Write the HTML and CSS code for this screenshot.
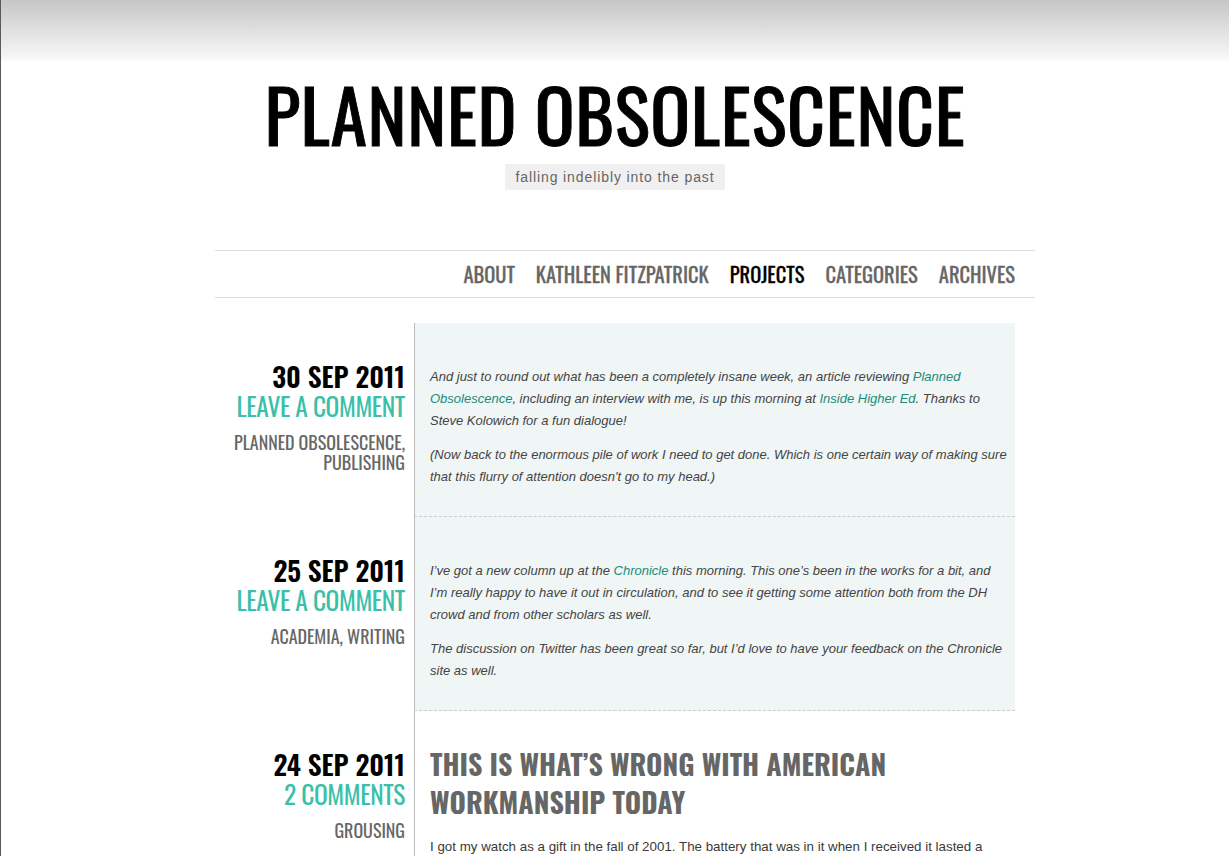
FILE: index.html
```html
<!DOCTYPE html>
<html>
<head>
<meta charset="utf-8">
<title>Planned Obsolescence</title>
<link rel="stylesheet" href="styles.css">
</head>
<body>
<header class="site-header">
  <h1 class="site-title">PLANNED OBSOLESCENCE</h1>
  <p class="tagline">falling indelibly into the past</p>
</header>
<div class="page">
  <nav class="site-nav">
    <a href="#">ABOUT</a>
    <a href="#">KATHLEEN FITZPATRICK</a>
    <a href="#" class="current">PROJECTS</a>
    <a href="#">CATEGORIES</a>
    <a href="#">ARCHIVES</a>
  </nav>
  <main class="posts">
    <article class="post aside">
      <div class="meta">
        <div class="date">30 SEP 2011</div>
        <a class="comments" href="#">LEAVE A COMMENT</a>
        <div class="cats"><a href="#">PLANNED OBSOLESCENCE</a>, <a href="#">PUBLISHING</a></div>
      </div>
      <div class="content">
        <p>And just to round out what has been a completely insane week, an article reviewing <a href="#">Planned Obsolescence</a>, including an interview with me, is up this morning at <a href="#">Inside Higher Ed</a>. Thanks to Steve Kolowich for a fun dialogue!</p>
        <p>(Now back to the enormous pile of work I need to get done. Which is one certain way of making sure that this flurry of attention doesn't go to my head.)</p>
      </div>
    </article>
    <article class="post aside">
      <div class="meta">
        <div class="date">25 SEP 2011</div>
        <a class="comments" href="#">LEAVE A COMMENT</a>
        <div class="cats"><a href="#">ACADEMIA</a>, <a href="#">WRITING</a></div>
      </div>
      <div class="content">
        <p>I’ve got a new column up at the <a href="#">Chronicle</a> this morning. This one’s been in the works for a bit, and I’m really happy to have it out in circulation, and to see it getting some attention both from the DH crowd and from other scholars as well.</p>
        <p>The discussion on Twitter has been great so far, but I’d love to have your feedback on the Chronicle site as well.</p>
      </div>
    </article>
    <article class="post standard">
      <div class="meta">
        <div class="date">24 SEP 2011</div>
        <a class="comments" href="#">2 COMMENTS</a>
        <div class="cats"><a href="#">GROUSING</a></div>
      </div>
      <div class="content">
        <h2 class="post-title">THIS IS WHAT’S WRONG WITH AMERICAN WORKMANSHIP TODAY</h2>
        <p>I got my watch as a gift in the fall of 2001. The battery that was in it when I received it lasted a couple of years, and then I had it replaced at a watch shop near where I live.</p>
      </div>
    </article>
  </main>
</div>
</body>
</html>
```

FILE: styles.css
```css
html {
  background: #fff linear-gradient(to bottom, #c6c6c6 0, #f9f9f9 60px, #fff 62px) no-repeat;
  border-left: 1px solid #5a5a5a;
}
body {
  margin: 0;
  font-family: "Liberation Sans", Arial, sans-serif;
  color: #444;
}
a { text-decoration: none; }

.site-header {
  display: flex;
  flex-direction: column;
  align-items: center;
  padding-top: 76px;
}
.site-title {
  margin: 0;
  font-family: "Oswald", "Open Sans", sans-serif;
  font-stretch: 75%;
  font-weight: 400;
  font-size: 74px;
  line-height: 74px;
  letter-spacing: 0.6px;
  -webkit-text-stroke: 0.9px #000;
  color: #000;
}
.tagline {
  margin: 14px 0 0;
  padding: 5px 10px;
  background: #f0f0f0;
  border-radius: 2px;
  font-size: 14px;
  line-height: 16px;
  letter-spacing: 0.9px;
  color: #666;
}

.page {
  width: 820px;
  margin: 0 auto;
  padding-left: 20px;
}

.site-nav {
  height: 48px;
  margin-top: 60px;
  border-top: 1px solid #ddd;
  border-bottom: 1px solid #ddd;
  box-sizing: border-box;
  display: flex;
  justify-content: flex-end;
  align-items: center;
  gap: 21px;
  padding-right: 20px;
  font-family: "Oswald", "Open Sans", sans-serif;
  font-stretch: 75%;
  font-weight: 400;
  font-size: 20.5px;
  line-height: 24px;
}
.site-nav a { color: #666; -webkit-text-stroke: 0.3px #666; }
.site-nav a.current { color: #000; -webkit-text-stroke: 0.3px #000; }

.posts {
  margin-top: 25px;
}
.post {
  display: grid;
  grid-template-columns: 199px 601px;
}
.meta {
  padding: 38px 9px 0 0;
  text-align: right;
  font-family: "Oswald", "Open Sans", sans-serif;
  font-stretch: 75%;
}
.date {
  font-weight: 600;
  font-size: 27.3px;
  line-height: 30px;
  color: #000;
}
.comments {
  display: block;
  font-size: 25.5px;
  letter-spacing: -0.4px;
  line-height: 30px;
  color: #3cbfa9;
}
.cats {
  margin-top: 11px;
  font-size: 18px;
  line-height: 20px;
  color: #666;
}
.cats a { color: #666; }

.content {
  border-left: 1px solid #bbb;
  padding: 43px 5px 16px 15px;
}
.aside .content {
  background: #f0f5f5;
  border-bottom: 1px dashed #ccc;
}
.standard .content {
  padding-top: 34px;
}
.content p {
  margin: 0 0 12px;
  font-size: 13px;
  line-height: 22px;
}
.aside .content p { font-style: italic; }
.standard .content p {
  font-size: 13.35px;
  color: #3a3a3a;
}
.content p a { color: #1a8c7b; }
.post-title {
  margin: 0 0 15px;
  font-family: "Oswald", "Open Sans", sans-serif;
  font-stretch: 75%;
  font-weight: 700;
  font-size: 28px;
  line-height: 38px;
  color: #666;
}
```
